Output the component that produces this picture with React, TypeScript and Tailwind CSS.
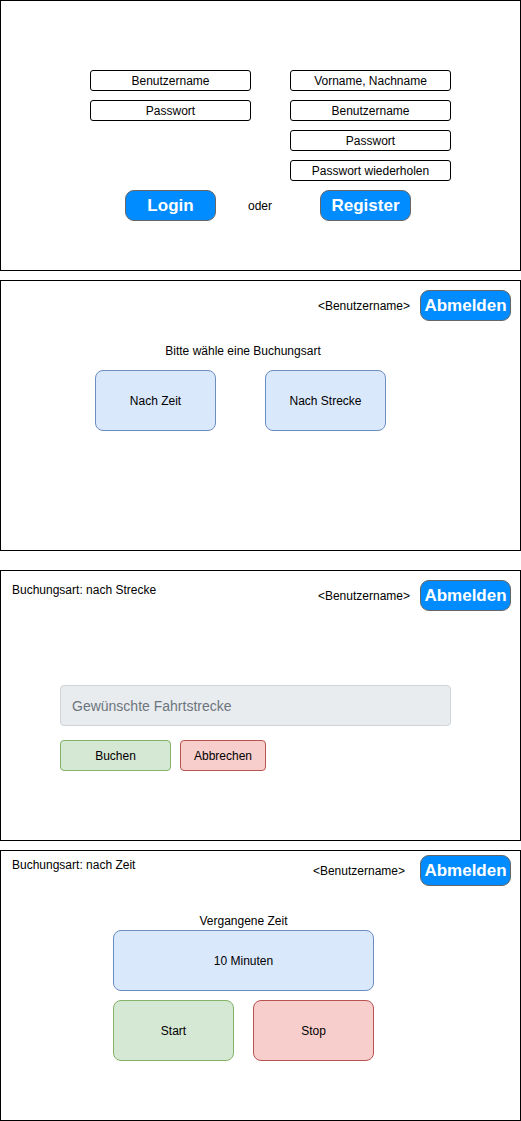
import React from "react";

const font = "font-['Liberation_Sans',Arial,sans-serif]";

function Field({ label }: { label: string }) {
  return (
    <div className="flex h-[21px] w-[161px] items-center justify-center rounded-[3px] border border-black text-[12px] leading-[14px] text-black">
      {label}
    </div>
  );
}

function BlueButton({ label, w = "w-[91px]" }: { label: string; w?: string }) {
  return (
    <div
      className={`flex h-[31px] ${w} items-center justify-center rounded-[9px] border border-[#666666] bg-[#008cff] text-[17px] font-bold leading-[20px] text-white`}
    >
      {label}
    </div>
  );
}

function Tile({
  label,
  cls,
  w,
  h,
}: {
  label: string;
  cls: string;
  w: string;
  h: string;
}) {
  return (
    <div
      className={`flex ${w} ${h} items-center justify-center rounded-[8px] border text-[12px] leading-[14px] text-black ${cls}`}
    >
      {label}
    </div>
  );
}

export default function App() {
  return (
    <div className={`${font} flex w-[521px] flex-col bg-white text-black`}>
      {/* Panel 1: Login / Register */}
      <div className="flex h-[271px] w-[521px] flex-col border border-black pl-[89px] pt-[69px]">
        <div className="flex items-start gap-[39px]">
          <div className="flex flex-col gap-[9px]">
            <Field label="Benutzername" />
            <Field label="Passwort" />
          </div>
          <div className="flex flex-col gap-[9px]">
            <Field label="Vorname, Nachname" />
            <Field label="Benutzername" />
            <Field label="Passwort" />
            <Field label="Passwort wiederholen" />
          </div>
        </div>
        <div className="ml-[35px] mt-[9px] flex items-center">
          <BlueButton label="Login" />
          <div className="flex w-[104px] items-center justify-center pr-[16px] text-[12px] leading-[14px]">
            oder
          </div>
          <BlueButton label="Register" />
        </div>
      </div>

      {/* Panel 2: choose booking type */}
      <div className="mt-[9px] flex h-[271px] w-[521px] flex-col border border-black pt-[9px]">
        <div className="flex items-center justify-end gap-[10px] pr-[9px]">
          <span className="text-[12px] leading-[14px]">&lt;Benutzername&gt;</span>
          <BlueButton label="Abmelden" />
        </div>
        <div className="ml-[94px] flex w-[291px] flex-col">
          <div className="mt-[23px] pl-[5px] text-center text-[12px] leading-[14px]">
            Bitte wähle eine Buchungsart
          </div>
          <div className="mt-[12px] flex gap-[49px]">
            <Tile label="Nach Zeit" cls="border-[#6c8ebf] bg-[#dae8fc]" w="w-[121px]" h="h-[61px]" />
            <Tile label="Nach Strecke" cls="border-[#6c8ebf] bg-[#dae8fc]" w="w-[121px]" h="h-[61px]" />
          </div>
        </div>
      </div>

      {/* Panel 3: by distance */}
      <div className="mt-[19px] flex h-[271px] w-[521px] flex-col border border-black pt-[9px]">
        <div className="flex items-start justify-between pl-[11px] pr-[9px]">
          <span className="pt-[3px] text-[12px] leading-[14px]">Buchungsart: nach Strecke</span>
          <div className="flex items-center gap-[10px]">
            <span className="text-[12px] leading-[14px]">&lt;Benutzername&gt;</span>
            <BlueButton label="Abmelden" />
          </div>
        </div>
        <div className="ml-[59px] mt-[74px] flex h-[41px] w-[391px] items-center rounded-[4px] border border-[#ced4da] bg-[#e9ecef] pl-[11px] text-[14px] leading-[16px] text-[#6c757d]">
          Gewünschte Fahrtstrecke
        </div>
        <div className="ml-[59px] mt-[14px] flex gap-[9px]">
          <div className="flex h-[31px] w-[111px] items-center justify-center rounded-[4px] border border-[#82b366] bg-[#d5e8d4] text-[12px] leading-[14px]">
            Buchen
          </div>
          <div className="flex h-[31px] w-[86px] items-center justify-center rounded-[4px] border border-[#b85450] bg-[#f8cecc] text-[12px] leading-[14px]">
            Abbrechen
          </div>
        </div>
      </div>

      {/* Panel 4: by time */}
      <div className="mt-[9px] flex h-[271px] w-[521px] flex-col border border-black pt-[4px]">
        <div className="flex items-start justify-between pl-[11px] pr-[9px]">
          <span className="pt-[3px] text-[12px] leading-[14px]">Buchungsart: nach Zeit</span>
          <div className="flex items-center gap-[15px]">
            <span className="text-[12px] leading-[14px]">&lt;Benutzername&gt;</span>
            <BlueButton label="Abmelden" />
          </div>
        </div>
        <div className="ml-[112px] flex w-[261px] flex-col">
          <div className="mt-[28px] text-center text-[12px] leading-[14px]">Vergangene Zeit</div>
          <div className="mt-[2px]">
            <Tile label="10 Minuten" cls="border-[#6c8ebf] bg-[#dae8fc]" w="w-[261px]" h="h-[61px]" />
          </div>
          <div className="mt-[9px] flex gap-[19px]">
            <Tile label="Start" cls="border-[#82b366] bg-[#d5e8d4]" w="w-[121px]" h="h-[61px]" />
            <Tile label="Stop" cls="border-[#b85450] bg-[#f8cecc]" w="w-[121px]" h="h-[61px]" />
          </div>
        </div>
      </div>
    </div>
  );
}
